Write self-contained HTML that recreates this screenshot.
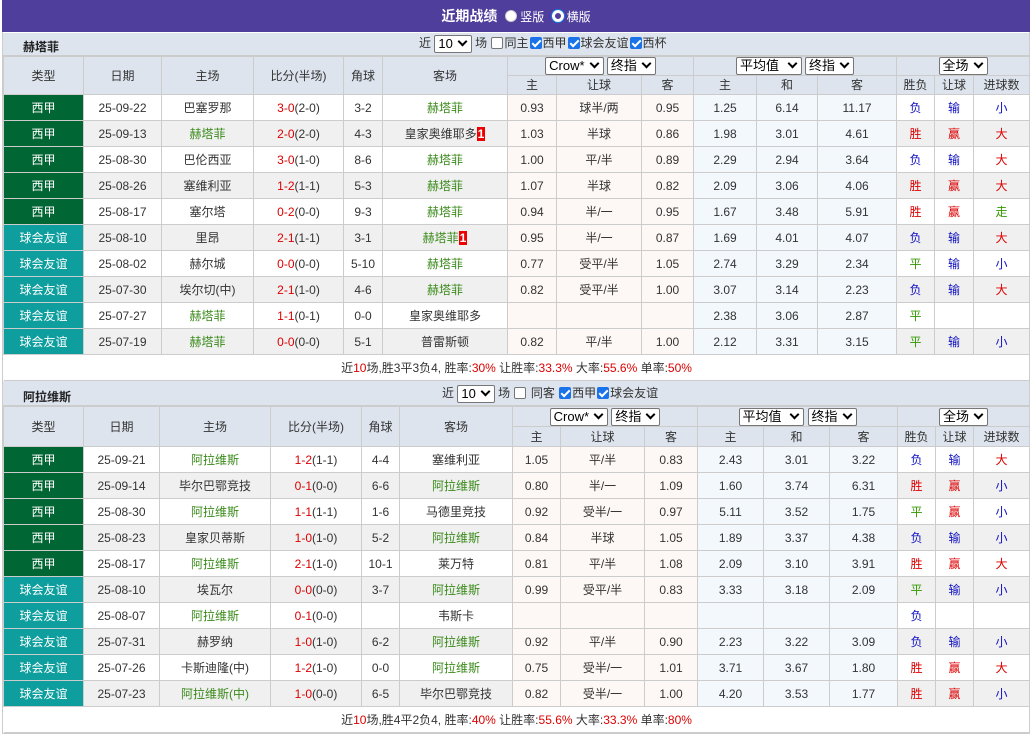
<!DOCTYPE html><html><head><meta charset="utf-8"><style>
*{box-sizing:border-box}
body{margin:0;width:1033px;height:738px;overflow:hidden;background:#fff;font-family:"Liberation Sans","Noto Sans CJK SC",sans-serif;font-size:12px;color:#333}
.wrap{position:absolute;left:2px;top:0;width:1028px;border:1px solid #ccc;border-top:0}
.title{height:32px;background:#4f3e9b;color:#fff;text-align:center;font-size:14px;font-weight:bold;line-height:32px;margin:0 -1px}
.title span{font-weight:normal;font-size:12px}
.rad{display:inline-block;width:12px;height:12px;border-radius:50%;background:#fff;vertical-align:-1px;margin:0 3px 0 4px;border:1px solid #ccc}
.rad.on{border:3px solid #fff;background:#4f3e9b;box-shadow:0 0 0 1px #1a73e8;}
.hd{height:23px;background:#dde4ee;position:relative;border-bottom:1px solid #ccc;margin-top:1px}
.hd b{position:absolute;left:20px;top:5px;font-size:12px;color:#222}
.hd .c{position:absolute;top:2px;white-space:nowrap;line-height:17px;height:18px}
.sel{display:inline-block;border:1px solid #767676;background:#fff;height:18px;line-height:16px;padding:0 3px;border-radius:2px;font-size:13px;color:#000;vertical-align:top}
.sel:after{content:"";display:inline-block;width:5px;height:5px;border-right:2px solid #000;border-bottom:2px solid #000;transform:rotate(45deg);margin:0 2px 3px 6px}
.cb{display:inline-block;width:12px;height:12px;border:1px solid #767676;border-radius:2px;background:#fff;vertical-align:-2px;margin:0 1px;position:relative}
.cb.on{background:#1a73e8;border-color:#1a73e8}
.cb.on:after{content:"";position:absolute;left:3px;top:0px;width:3px;height:7px;border-right:2px solid #fff;border-bottom:2px solid #fff;transform:rotate(45deg)}
table{border-collapse:collapse;table-layout:fixed;width:1026px}
td{border:1px solid #ccc;text-align:center;height:26px;padding:0;white-space:nowrap;overflow:hidden;color:#333;line-height:14px}
tr.h td{background:#dde4ee;height:19px;color:#333}
tr.h td.big{height:38px}
.t2 tr.h td{height:20px}
.t2 tr.h td.big{height:40px}
tr.g td{background:#f0f0f0}
td.a{background:#fdf8f5!important}
td.e{background:#f2f8fc!important}
td.xj{background:#006633!important;color:#fff}
td.yy{background:#0e9e9e!important;color:#fff}
.gr{color:#3a8a1a}.r{color:#dd0000}.b{color:#1010c0}.gn{color:#339900}
.n1{background:#e00;color:#fff;font-weight:bold;padding:0 1px}
td.sum{height:26px;border-left:0;border-right:0}
</style></head><body><div class="wrap">
<div class="title">近期战绩 <span><i class="rad"></i>竖版 <i class="rad on"></i>横版</span></div>
<div class="hd"><b>赫塔菲</b><div class="c" style="left:416px">近 <span class="sel">10</span> 场 <i class="cb"></i>同主<i class="cb on"></i>西甲<i class="cb on"></i>球会友谊<i class="cb on"></i>西杯</div></div>
<table><colgroup><col style="width:80px"><col style="width:78px"><col style="width:92px"><col style="width:90px"><col style="width:39px"><col style="width:125px"><col style="width:49px"><col style="width:85px"><col style="width:52px"><col style="width:63px"><col style="width:61px"><col style="width:79px"><col style="width:38px"><col style="width:39px"><col style="width:56px"></colgroup>
<tr class="h"><td rowspan="2" class="big">类型</td><td rowspan="2" class="big">日期</td><td rowspan="2" class="big">主场</td><td rowspan="2" class="big">比分(半场)</td><td rowspan="2" class="big">角球</td><td rowspan="2" class="big">客场</td><td colspan="3"><span class="sel">Crow*</span> <span class="sel">终指</span></td><td colspan="3"><span class="sel">平均值 </span> <span class="sel">终指</span></td><td colspan="3"><span class="sel">全场</span></td></tr>
<tr class="h"><td>主</td><td>让球</td><td>客</td><td>主</td><td>和</td><td>客</td><td>胜负</td><td>让球</td><td>进球数</td></tr>
<tr><td class="xj">西甲</td><td>25-09-22</td><td>巴塞罗那</td><td><span class="r">3-0</span>(2-0)</td><td>3-2</td><td class="gr">赫塔菲</td><td class="a">0.93</td><td class="a">球半/两</td><td class="a">0.95</td><td class="e">1.25</td><td class="e">6.14</td><td class="e">11.17</td><td class="b">负</td><td class="b">输</td><td class="b">小</td></tr>
<tr class="g"><td class="xj">西甲</td><td>25-09-13</td><td class="gr">赫塔菲</td><td><span class="r">2-0</span>(2-0)</td><td>4-3</td><td>皇家奥维耶多<span class="n1">1</span></td><td class="a">1.03</td><td class="a">半球</td><td class="a">0.86</td><td class="e">1.98</td><td class="e">3.01</td><td class="e">4.61</td><td class="r">胜</td><td class="r">赢</td><td class="r">大</td></tr>
<tr><td class="xj">西甲</td><td>25-08-30</td><td>巴伦西亚</td><td><span class="r">3-0</span>(1-0)</td><td>8-6</td><td class="gr">赫塔菲</td><td class="a">1.00</td><td class="a">平/半</td><td class="a">0.89</td><td class="e">2.29</td><td class="e">2.94</td><td class="e">3.64</td><td class="b">负</td><td class="b">输</td><td class="r">大</td></tr>
<tr class="g"><td class="xj">西甲</td><td>25-08-26</td><td>塞维利亚</td><td><span class="r">1-2</span>(1-1)</td><td>5-3</td><td class="gr">赫塔菲</td><td class="a">1.07</td><td class="a">半球</td><td class="a">0.82</td><td class="e">2.09</td><td class="e">3.06</td><td class="e">4.06</td><td class="r">胜</td><td class="r">赢</td><td class="r">大</td></tr>
<tr><td class="xj">西甲</td><td>25-08-17</td><td>塞尔塔</td><td><span class="r">0-2</span>(0-0)</td><td>9-3</td><td class="gr">赫塔菲</td><td class="a">0.94</td><td class="a">半/一</td><td class="a">0.95</td><td class="e">1.67</td><td class="e">3.48</td><td class="e">5.91</td><td class="r">胜</td><td class="r">赢</td><td class="gn">走</td></tr>
<tr class="g"><td class="yy">球会友谊</td><td>25-08-10</td><td>里昂</td><td><span class="r">2-1</span>(1-1)</td><td>3-1</td><td class="gr">赫塔菲<span class="n1">1</span></td><td class="a">0.95</td><td class="a">半/一</td><td class="a">0.87</td><td class="e">1.69</td><td class="e">4.01</td><td class="e">4.07</td><td class="b">负</td><td class="b">输</td><td class="r">大</td></tr>
<tr><td class="yy">球会友谊</td><td>25-08-02</td><td>赫尔城</td><td><span class="r">0-0</span>(0-0)</td><td>5-10</td><td class="gr">赫塔菲</td><td class="a">0.77</td><td class="a">受平/半</td><td class="a">1.05</td><td class="e">2.74</td><td class="e">3.29</td><td class="e">2.34</td><td class="gn">平</td><td class="b">输</td><td class="b">小</td></tr>
<tr class="g"><td class="yy">球会友谊</td><td>25-07-30</td><td>埃尔切(中)</td><td><span class="r">2-1</span>(1-0)</td><td>4-6</td><td class="gr">赫塔菲</td><td class="a">0.82</td><td class="a">受平/半</td><td class="a">1.00</td><td class="e">3.07</td><td class="e">3.14</td><td class="e">2.23</td><td class="b">负</td><td class="b">输</td><td class="r">大</td></tr>
<tr><td class="yy">球会友谊</td><td>25-07-27</td><td class="gr">赫塔菲</td><td><span class="r">1-1</span>(0-1)</td><td>0-0</td><td>皇家奥维耶多</td><td class="a"></td><td class="a"></td><td class="a"></td><td class="e">2.38</td><td class="e">3.06</td><td class="e">2.87</td><td class="gn">平</td><td></td><td></td></tr>
<tr class="g"><td class="yy">球会友谊</td><td>25-07-19</td><td class="gr">赫塔菲</td><td><span class="r">0-0</span>(0-0)</td><td>5-1</td><td>普雷斯顿</td><td class="a">0.82</td><td class="a">平/半</td><td class="a">1.00</td><td class="e">2.12</td><td class="e">3.31</td><td class="e">3.15</td><td class="gn">平</td><td class="b">输</td><td class="b">小</td></tr>
<tr><td colspan="15" class="sum">近<span class="r">10</span>场,胜3平3负4, 胜率:<span class="r">30%</span> 让胜率:<span class="r">33.3%</span> 大率:<span class="r">55.6%</span> 单率:<span class="r">50%</span></td></tr>
</table>
<div class="hd" style="margin-top:0;height:25px"><b style="top:7px">阿拉维斯</b><div class="c" style="left:439px;top:4px">近 <span class="sel">10</span> 场 <i class="cb"></i> 同客 <i class="cb on"></i>西甲<i class="cb on"></i>球会友谊</div></div>
<table class="t2"><colgroup><col style="width:80px"><col style="width:76px"><col style="width:111px"><col style="width:91px"><col style="width:38px"><col style="width:113px"><col style="width:48px"><col style="width:84px"><col style="width:53px"><col style="width:66px"><col style="width:66px"><col style="width:68px"><col style="width:38px"><col style="width:38px"><col style="width:56px"></colgroup>
<tr class="h"><td rowspan="2" class="big">类型</td><td rowspan="2" class="big">日期</td><td rowspan="2" class="big">主场</td><td rowspan="2" class="big">比分(半场)</td><td rowspan="2" class="big">角球</td><td rowspan="2" class="big">客场</td><td colspan="3"><span class="sel">Crow*</span> <span class="sel">终指</span></td><td colspan="3"><span class="sel">平均值 </span> <span class="sel">终指</span></td><td colspan="3"><span class="sel">全场</span></td></tr>
<tr class="h"><td>主</td><td>让球</td><td>客</td><td>主</td><td>和</td><td>客</td><td>胜负</td><td>让球</td><td>进球数</td></tr>
<tr><td class="xj">西甲</td><td>25-09-21</td><td class="gr">阿拉维斯</td><td><span class="r">1-2</span>(1-1)</td><td>4-4</td><td>塞维利亚</td><td class="a">1.05</td><td class="a">平/半</td><td class="a">0.83</td><td class="e">2.43</td><td class="e">3.01</td><td class="e">3.22</td><td class="b">负</td><td class="b">输</td><td class="r">大</td></tr>
<tr class="g"><td class="xj">西甲</td><td>25-09-14</td><td>毕尔巴鄂竞技</td><td><span class="r">0-1</span>(0-0)</td><td>6-6</td><td class="gr">阿拉维斯</td><td class="a">0.80</td><td class="a">半/一</td><td class="a">1.09</td><td class="e">1.60</td><td class="e">3.74</td><td class="e">6.31</td><td class="r">胜</td><td class="r">赢</td><td class="b">小</td></tr>
<tr><td class="xj">西甲</td><td>25-08-30</td><td class="gr">阿拉维斯</td><td><span class="r">1-1</span>(1-1)</td><td>1-6</td><td>马德里竞技</td><td class="a">0.92</td><td class="a">受半/一</td><td class="a">0.97</td><td class="e">5.11</td><td class="e">3.52</td><td class="e">1.75</td><td class="gn">平</td><td class="r">赢</td><td class="b">小</td></tr>
<tr class="g"><td class="xj">西甲</td><td>25-08-23</td><td>皇家贝蒂斯</td><td><span class="r">1-0</span>(1-0)</td><td>5-2</td><td class="gr">阿拉维斯</td><td class="a">0.84</td><td class="a">半球</td><td class="a">1.05</td><td class="e">1.89</td><td class="e">3.37</td><td class="e">4.38</td><td class="b">负</td><td class="b">输</td><td class="b">小</td></tr>
<tr><td class="xj">西甲</td><td>25-08-17</td><td class="gr">阿拉维斯</td><td><span class="r">2-1</span>(1-0)</td><td>10-1</td><td>莱万特</td><td class="a">0.81</td><td class="a">平/半</td><td class="a">1.08</td><td class="e">2.09</td><td class="e">3.10</td><td class="e">3.91</td><td class="r">胜</td><td class="r">赢</td><td class="r">大</td></tr>
<tr class="g"><td class="yy">球会友谊</td><td>25-08-10</td><td>埃瓦尔</td><td><span class="r">0-0</span>(0-0)</td><td>3-7</td><td class="gr">阿拉维斯</td><td class="a">0.99</td><td class="a">受平/半</td><td class="a">0.83</td><td class="e">3.33</td><td class="e">3.18</td><td class="e">2.09</td><td class="gn">平</td><td class="b">输</td><td class="b">小</td></tr>
<tr><td class="yy">球会友谊</td><td>25-08-07</td><td class="gr">阿拉维斯</td><td><span class="r">0-1</span>(0-0)</td><td></td><td>韦斯卡</td><td class="a"></td><td class="a"></td><td class="a"></td><td class="e"></td><td class="e"></td><td class="e"></td><td class="b">负</td><td></td><td></td></tr>
<tr class="g"><td class="yy">球会友谊</td><td>25-07-31</td><td>赫罗纳</td><td><span class="r">1-0</span>(1-0)</td><td>6-2</td><td class="gr">阿拉维斯</td><td class="a">0.92</td><td class="a">平/半</td><td class="a">0.90</td><td class="e">2.23</td><td class="e">3.22</td><td class="e">3.09</td><td class="b">负</td><td class="b">输</td><td class="b">小</td></tr>
<tr><td class="yy">球会友谊</td><td>25-07-26</td><td>卡斯迪隆(中)</td><td><span class="r">1-2</span>(1-0)</td><td>0-0</td><td class="gr">阿拉维斯</td><td class="a">0.75</td><td class="a">受半/一</td><td class="a">1.01</td><td class="e">3.71</td><td class="e">3.67</td><td class="e">1.80</td><td class="r">胜</td><td class="r">赢</td><td class="r">大</td></tr>
<tr class="g"><td class="yy">球会友谊</td><td>25-07-23</td><td class="gr">阿拉维斯(中)</td><td><span class="r">1-0</span>(0-0)</td><td>6-5</td><td>毕尔巴鄂竞技</td><td class="a">0.82</td><td class="a">受半/一</td><td class="a">1.00</td><td class="e">4.20</td><td class="e">3.53</td><td class="e">1.77</td><td class="r">胜</td><td class="r">赢</td><td class="b">小</td></tr>
<tr><td colspan="15" class="sum">近<span class="r">10</span>场,胜4平2负4, 胜率:<span class="r">40%</span> 让胜率:<span class="r">55.6%</span> 大率:<span class="r">33.3%</span> 单率:<span class="r">80%</span></td></tr>
</table>
</div></body></html>
